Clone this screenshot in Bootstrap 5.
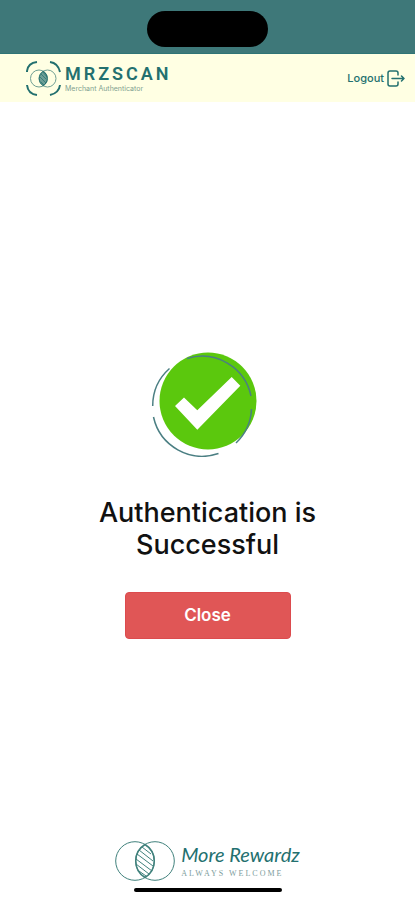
<!DOCTYPE html>
<html lang="en">
<head>
<meta charset="utf-8">
<meta name="viewport" content="width=device-width, initial-scale=1">
<title>MRZSCAN Merchant Authenticator</title>
<link rel="stylesheet" href="https://cdn.jsdelivr.net/npm/bootstrap@5.3.0/dist/css/bootstrap.min.css">
<style>
  body { font-family: Inter, "Liberation Sans", sans-serif; background: #fff; color: #111; }
  .status-strip { background: #3e7879; height: 54px; padding-top: 11px; border-bottom: 1px solid #2f7476; }
  .island { width: 121px; height: 36px; background: #000; }
  .app-bar { background: #ffffe3; height: 48px; padding: 0 10px 0 26px; }
  .brand-link, .logout-link { color: #23706f; }
  .brand-name { font: 600 18px/22px Roboto, sans-serif; letter-spacing: 3px; }
  .brand-sub { font-size: 7px; line-height: 8px; color: #7f9f91; }
  .brand-copy { margin-left: 4px; }
  .logout-link { font-size: 11px; line-height: 16px; font-weight: 500; gap: 3px; }
  .result { padding-top: 48px; }
  .result-title { font-size: 27px; line-height: 32px; font-weight: 500; width: 240px; margin: 40px 0 31px; }
  .btn-close-result { --bs-btn-color: #fff; --bs-btn-bg: #e05656; --bs-btn-border-color: #dc4b4e; --bs-btn-hover-color: #fff; --bs-btn-hover-bg: #cc4848; --bs-btn-hover-border-color: #cc4848; --bs-btn-border-radius: 4px; width: 166px; height: 47px; font-size: 17px; font-weight: 600; }
  .rewards { gap: 6px; color: #23706f; }
  .rewards-name { font: italic 400 20px/26px Lato, cursive; }
  .rewards-sub { font: 400 8px/14px "Liberation Serif", serif; letter-spacing: 2px; color: #7d9d9d; }
  .home-bar { width: 148px; height: 4px; background: #000; margin: 7px 0 8px; }
</style>
</head>
<body class="d-flex flex-column min-vh-100">
<div class="status-strip d-flex justify-content-center align-items-start"><div class="island rounded-pill"></div></div>
<header class="app-bar d-flex align-items-center justify-content-between">
  <a href="#" class="brand-link d-flex align-items-center text-decoration-none">
    <svg width="35" height="35" viewBox="0 0 35 35" fill="none" stroke="#23706f" aria-hidden="true">
      <path d="M1 11V10Q2 2 11 1M24 1Q32 2 34 11M34 24Q33 32 24 34M11 34Q2 33 1 24" stroke-width="2"/>
      <g stroke="#6f9f93"><circle cx="13" cy="17.500" r="8.500"/><circle cx="21.500" cy="17.500" r="8.500"/></g>
      <path d="M17.250 10.300A8.500 8.500 0 0 1 17.250 24.700A8.500 8.500 0 0 1 17.250 10.300Z" fill="#6d9f96"/>
      <path d="M15 13L20 18M14 16L20 22M17 11L21 16M15 21L18 24" stroke-width=".7"/>
    </svg>
    <span class="brand-copy d-flex flex-column"><span class="brand-name">MRZSCAN</span><span class="brand-sub">Merchant Authenticator</span></span>
  </a>
  <a href="#" class="logout-link d-flex align-items-center text-decoration-none">Logout
    <svg width="18" height="17" viewBox="0 0 18 17" fill="none" stroke="#23706f" stroke-width="1.500" stroke-linecap="round" stroke-linejoin="round" aria-hidden="true">
      <path d="M11 5V3Q11 1 9 1H3Q1 1 1 3V14Q1 16 3 16H9Q11 16 11 14V12M5 8.500H17M14.500 6L17 8.500L14.500 11"/>
    </svg>
  </a>
</header>
<main class="result flex-grow-1 d-flex flex-column align-items-center justify-content-center text-center">
  <svg width="116" height="105" viewBox="150 351 116 105" fill="none" aria-hidden="true">
    <circle cx="208" cy="400" r="48.500" fill="#5bc80d"/>
    <path d="M175 405L184 396.500L197.300 409.300L231.700 376L240.300 384.700L197.300 428.700Z" fill="#fff"/>
    <g stroke="#4b7f83" stroke-width="1.500"><path d="M169.500 367.500A50 50 0 0 0 152.700 405"/><path d="M153.500 416A50 50 0 0 0 218.500 452.500"/><path d="M236 442A50 50 0 0 0 251.500 408"/><path d="M187 357.500A50 50 0 0 1 251 395"/></g>
  </svg>
  <h1 class="result-title">Authentication is Successful</h1>
  <button type="button" class="btn btn-close-result">Close</button>
</main>
<footer class="d-flex flex-column align-items-center">
  <div class="rewards d-flex align-items-center">
    <svg width="60" height="40" viewBox="0 0 60 40" fill="none" stroke="#40817c" stroke-width="1" aria-hidden="true">
      <circle cx="20" cy="20" r="19.300"/><circle cx="40" cy="20" r="19.300"/>
      <path d="M30 3.500A19.300 19.300 0 0 1 30 36.500A19.300 19.300 0 0 1 30 3.500Z" stroke-width="1.500"/>
      <path d="M27 6L36 13M24 9L38 20M22 13L38 25M21 18L37 30M21 23L34 33M24 30L31 35"/>
    </svg>
    <div class="d-flex flex-column"><span class="rewards-name">More Rewardz</span><span class="rewards-sub">ALWAYS WELCOME</span></div>
  </div>
  <div class="home-bar rounded-pill"></div>
</footer>
<script src="https://cdn.jsdelivr.net/npm/bootstrap@5.3.0/dist/js/bootstrap.bundle.min.js"></script>
</body>
</html>
